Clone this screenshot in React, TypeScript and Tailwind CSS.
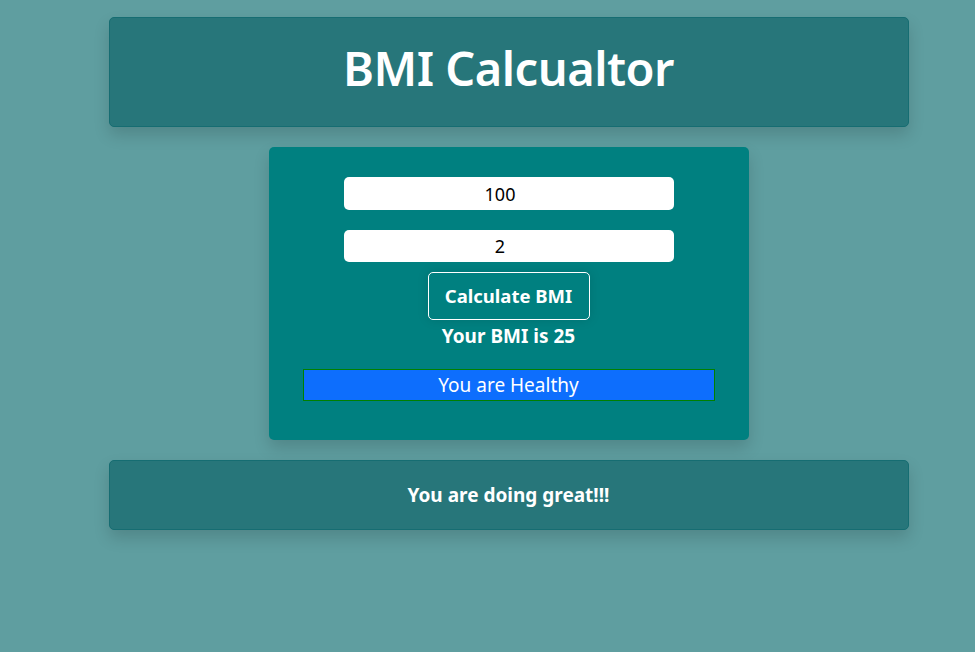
export default function App() {
  return (
    <div
      className="min-h-[652px] w-full bg-[#5f9ea0] pl-[42px] pt-[17px]"
      style={{ fontFamily: '"Noto Sans", "Open Sans", sans-serif' }}
    >
      <div className="mx-auto flex h-[110px] w-[800px] items-center justify-center rounded-[5px] border border-[#166d72] bg-[#27767a] pb-[8px] shadow-[0_8px_16px_rgba(0,0,0,0.15)]">
        <h1 className="text-[47px] font-semibold leading-none tracking-[-0.5px] text-white">BMI Calcualtor</h1>
      </div>

      <div className="mx-auto mt-[20px] flex h-[293px] w-[480px] flex-col items-center rounded-[5px] bg-[#008080] pt-[30px] shadow-[0_8px_16px_rgba(0,0,0,0.15)]">
        <input
          readOnly
          value="100"
          className="h-[33px] w-[330px] rounded-[5px] bg-white pr-[17px] text-center text-[18px] text-black outline-none"
        />
        <input
          readOnly
          value="2"
          className="mt-[20px] h-[32px] w-[330px] rounded-[5px] bg-white pr-[17px] text-center text-[18px] text-black outline-none"
        />
        <button className="mt-[10px] h-[48px] w-[162px] rounded-[5px] border border-white text-[18.5px] font-bold text-white shadow-[0_0_12px_rgba(0,0,0,0.12)]">
          Calculate BMI
        </button>
        <p className="mt-[3px] text-[19px] font-bold leading-[26px] text-white">Your BMI is 25</p>
        <div className="mt-[20px] flex h-[32px] w-[412px] items-center justify-center border border-[#008000] bg-[#0d6efd] text-[19px] text-white">
          You are Healthy
        </div>
      </div>

      <div className="mx-auto mt-[20px] flex h-[70px] w-[800px] items-center justify-center rounded-[5px] border border-[#166d72] bg-[#27767a] shadow-[0_8px_16px_rgba(0,0,0,0.15)]">
        <p className="text-[19px] font-bold text-white">You are doing great!!!</p>
      </div>
    </div>
  );
}
